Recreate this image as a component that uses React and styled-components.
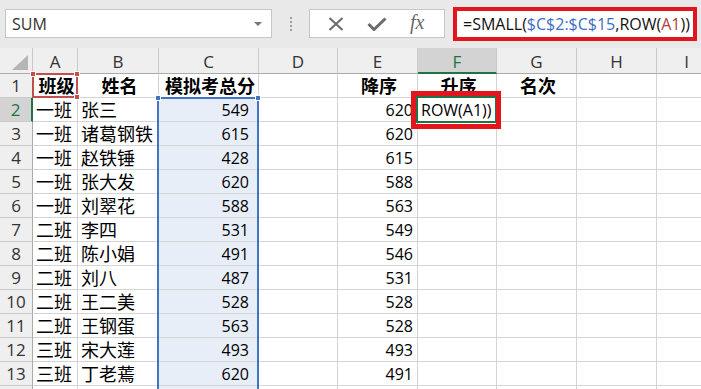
import React from "react";
import styled, { createGlobalStyle } from "styled-components";

const GlobalStyle = createGlobalStyle`
  body {
    margin: 0;
    background: #fff;
    overflow: hidden;
  }
  * { box-sizing: border-box; }
`;

const letters = ["A", "B", "C", "D", "E", "F", "G", "H", "I"];

const rows = [
  ["一班", "张三", 549, 620],
  ["一班", "诸葛钢铁", 615, 620],
  ["一班", "赵铁锤", 428, 615],
  ["一班", "张大发", 620, 588],
  ["一班", "刘翠花", 588, 563],
  ["二班", "李四", 531, 549],
  ["二班", "陈小娟", 491, 546],
  ["二班", "刘八", 487, 531],
  ["二班", "王二美", 528, 528],
  ["二班", "王钢蛋", 563, 528],
  ["三班", "宋大莲", 493, 493],
  ["三班", "丁老蔫", 620, 491],
];

const App = () => {
  return (
    <Page>
      <GlobalStyle />
      <FormulaBar>
        <NameBox>
          SUM
          <DropArrow />
        </NameBox>
        <Grip>
          <svg width="4" height="16" viewBox="0 0 4 16">
            <rect x="1" y="1" width="2" height="2" fill="#a0a0a0" />
            <rect x="1" y="5" width="2" height="2" fill="#a0a0a0" />
            <rect x="1" y="9" width="2" height="2" fill="#a0a0a0" />
            <rect x="1" y="13" width="2" height="2" fill="#a0a0a0" />
          </svg>
        </Grip>
        <FxButtons>
          <svg width="16" height="14" viewBox="0 0 16 14">
            <path d="M1.5 1 L14.5 13 M14.5 1 L1.5 13" stroke="#6a6a6a" strokeWidth="2" fill="none" />
          </svg>
          <svg width="20" height="14" viewBox="0 0 20 14">
            <path d="M1.5 7 L7 12.5 L18.5 1.5" stroke="#6a6a6a" strokeWidth="3" fill="none" />
          </svg>
          <FxLabel>fx</FxLabel>
        </FxButtons>
        <FormulaInput>
          =SMALL(<RefBlue>$C$2:$C$15</RefBlue>,ROW(<RefRed>A1</RefRed>))
        </FormulaInput>
      </FormulaBar>

      <Sheet>
        <Corner>
          <svg width="16" height="15" viewBox="0 0 16 15">
            <path d="M0 15 L16 15 L16 0 Z" fill="#b5b5b5" />
          </svg>
        </Corner>
        {letters.map((l) => (
          <ColHead key={l} $active={l === "F"}>{l}</ColHead>
        ))}

        <RowHead>1</RowHead>
        <Cell $zh $bold $align="center">班级</Cell>
        <Cell $zh $bold $align="center">姓名</Cell>
        <Cell $zh $bold $align="center">模拟考总分</Cell>
        <Cell />
        <Cell $zh $bold $align="center">降序</Cell>
        <Cell $zh $bold $align="center">升序</Cell>
        <Cell $zh $bold $align="center">名次</Cell>
        <Cell />
        <Cell />

        {rows.map((r, i) => (
          <React.Fragment key={i}>
            <RowHead $active={i === 0}>{i + 2}</RowHead>
            <Cell $zh>{r[0]}</Cell>
            <Cell $zh>{r[1]}</Cell>
            <Cell $align="flex-end" $pr={9} $fill>{r[2]}</Cell>
            <Cell />
            <Cell $align="flex-end" $pr={4}>{r[3]}</Cell>
            <Cell>{i === 0 ? "ROW(A1))" : ""}</Cell>
            <Cell />
            <Cell />
            <Cell />
          </React.Fragment>
        ))}

        {/* row 14: only its top edge is in view */}
        <RowHead />
        {letters.map((l) => (
          <Cell key={l} $fill={l === "C"} />
        ))}

        <RefBox $color="#c0504d" style={{ left: 32, top: 25, width: 46, height: 25 }}>
          <Handle $color="#c0504d" $x="left" $y="top" />
          <Handle $color="#c0504d" $x="right" $y="top" />
          <Handle $color="#c0504d" $x="right" $y="bottom" />
        </RefBox>
        <RefBox $color="#4472c4" style={{ left: 157, top: 49, width: 102, height: 320 }}>
          <Handle $color="#4472c4" $x="left" $y="top" />
          <Handle $color="#4472c4" $x="right" $y="top" />
        </RefBox>
        <RefBox $color="#217346" style={{ left: 416, top: 48, width: 81, height: 27 }} />
        <Callout />
      </Sheet>
    </Page>
  );
};

export default App;

const Page = styled.div`
  width: 701px;
  height: 389px;
  overflow: hidden;
  background: #fff;
  font-family: "Open Sans", "Noto Sans CJK SC", sans-serif;
`;

const FormulaBar = styled.div`
  height: 48px;
  background: #e9e9e9;
  display: flex;
  align-items: flex-start;
  padding: 9px 0 0 5px;
`;

const NameBox = styled.div`
  position: relative;
  width: 267px;
  height: 29px;
  background: #fff;
  border: 1px solid #c6c6c6;
  display: flex;
  align-items: center;
  padding-left: 6px;
  font-size: 16px;
  color: #333;
`;

const DropArrow = styled.span`
  position: absolute;
  right: 9px;
  top: 12px;
  width: 0;
  height: 0;
  border-left: 4px solid transparent;
  border-right: 4px solid transparent;
  border-top: 4px solid #777;
`;

const Grip = styled.div`
  width: 37px;
  height: 29px;
  display: flex;
  align-items: center;
  justify-content: center;
`;

const FxButtons = styled.div`
  width: 136px;
  height: 29px;
  background: #fff;
  border: 1px solid #c6c6c6;
  display: flex;
  align-items: center;
  justify-content: space-around;
  padding: 0 8px 0 6px;
`;

const FxLabel = styled.span`
  font-family: "Liberation Serif", serif;
  font-style: italic;
  font-size: 20px;
  color: #6a6a6a;
  line-height: 1;
  margin-top: -3px;
`;

const FormulaInput = styled.div`
  margin: -2px 4px 0 8px;
  flex: 1;
  height: 34px;
  background: #fff;
  border: 4px solid #e3161f;
  display: flex;
  align-items: center;
  padding-left: 6px;
  font-size: 16px;
  color: #111;
  white-space: nowrap;
`;

const RefBlue = styled.span`
  color: #3c6fc2;
`;

const RefRed = styled.span`
  color: #b5393d;
`;

const Sheet = styled.div`
  position: relative;
  display: grid;
  grid-template-columns: 33px 45px 81px 100px 79px 80px 79px 80px 80px 60px;
  grid-template-rows: 26px;
  grid-auto-rows: 24px;
`;

const Corner = styled.div`
  background: #efefef;
  border-right: 1px solid #c9c9c9;
  border-bottom: 1px solid #ababab;
  display: flex;
  align-items: flex-end;
  justify-content: flex-end;
  padding: 0 4px 3px 0;
`;

const ColHead = styled.div`
  background: ${(p) => (p.$active ? "#d3d3d3" : "#efefef")};
  color: ${(p) => (p.$active ? "#217346" : "#333")};
  border-right: 1px solid #cacaca;
  border-bottom: ${(p) => (p.$active ? "2px solid #217346" : "1px solid #ababab")};
  display: flex;
  align-items: center;
  justify-content: center;
  font-size: 17px;
  padding-top: 2px;
`;

const RowHead = styled.div`
  background: ${(p) => (p.$active ? "#d3d3d3" : "#efefef")};
  color: ${(p) => (p.$active ? "#217346" : "#333")};
  border-bottom: 1px solid #cacaca;
  border-right: ${(p) => (p.$active ? "2px solid #217346" : "1px solid #ababab")};
  display: flex;
  align-items: center;
  justify-content: center;
  font-size: 17px;
`;

const Cell = styled.div`
  border-right: 1px solid #d4d4d4;
  border-bottom: 1px solid #d4d4d4;
  background: ${(p) => (p.$fill ? "#e8eef8" : "#fff")};
  display: flex;
  align-items: center;
  justify-content: ${(p) => p.$align || "flex-start"};
  padding: 0 ${(p) => p.$pr ?? 0}px 0 3px;
  font-size: ${(p) => (p.$zh ? "18px" : "16px")};
  font-weight: ${(p) => (p.$bold ? 700 : 400)};
  color: #000;
  white-space: nowrap;
  line-height: 1;
`;

const RefBox = styled.div`
  position: absolute;
  border: 2px solid ${(p) => p.$color};
  pointer-events: none;
`;

const Handle = styled.span`
  position: absolute;
  width: 6px;
  height: 6px;
  background: ${(p) => p.$color};
  border: 1px solid #fff;
  ${(p) => (p.$x === "left" ? "left: -4px;" : "right: -4px;")}
  ${(p) => (p.$y === "top" ? "top: -4px;" : "bottom: -4px;")}
`;

const Callout = styled.div`
  position: absolute;
  left: 411px;
  top: 43px;
  width: 90px;
  height: 38px;
  border: 5px solid #e3161f;
  pointer-events: none;
`;
